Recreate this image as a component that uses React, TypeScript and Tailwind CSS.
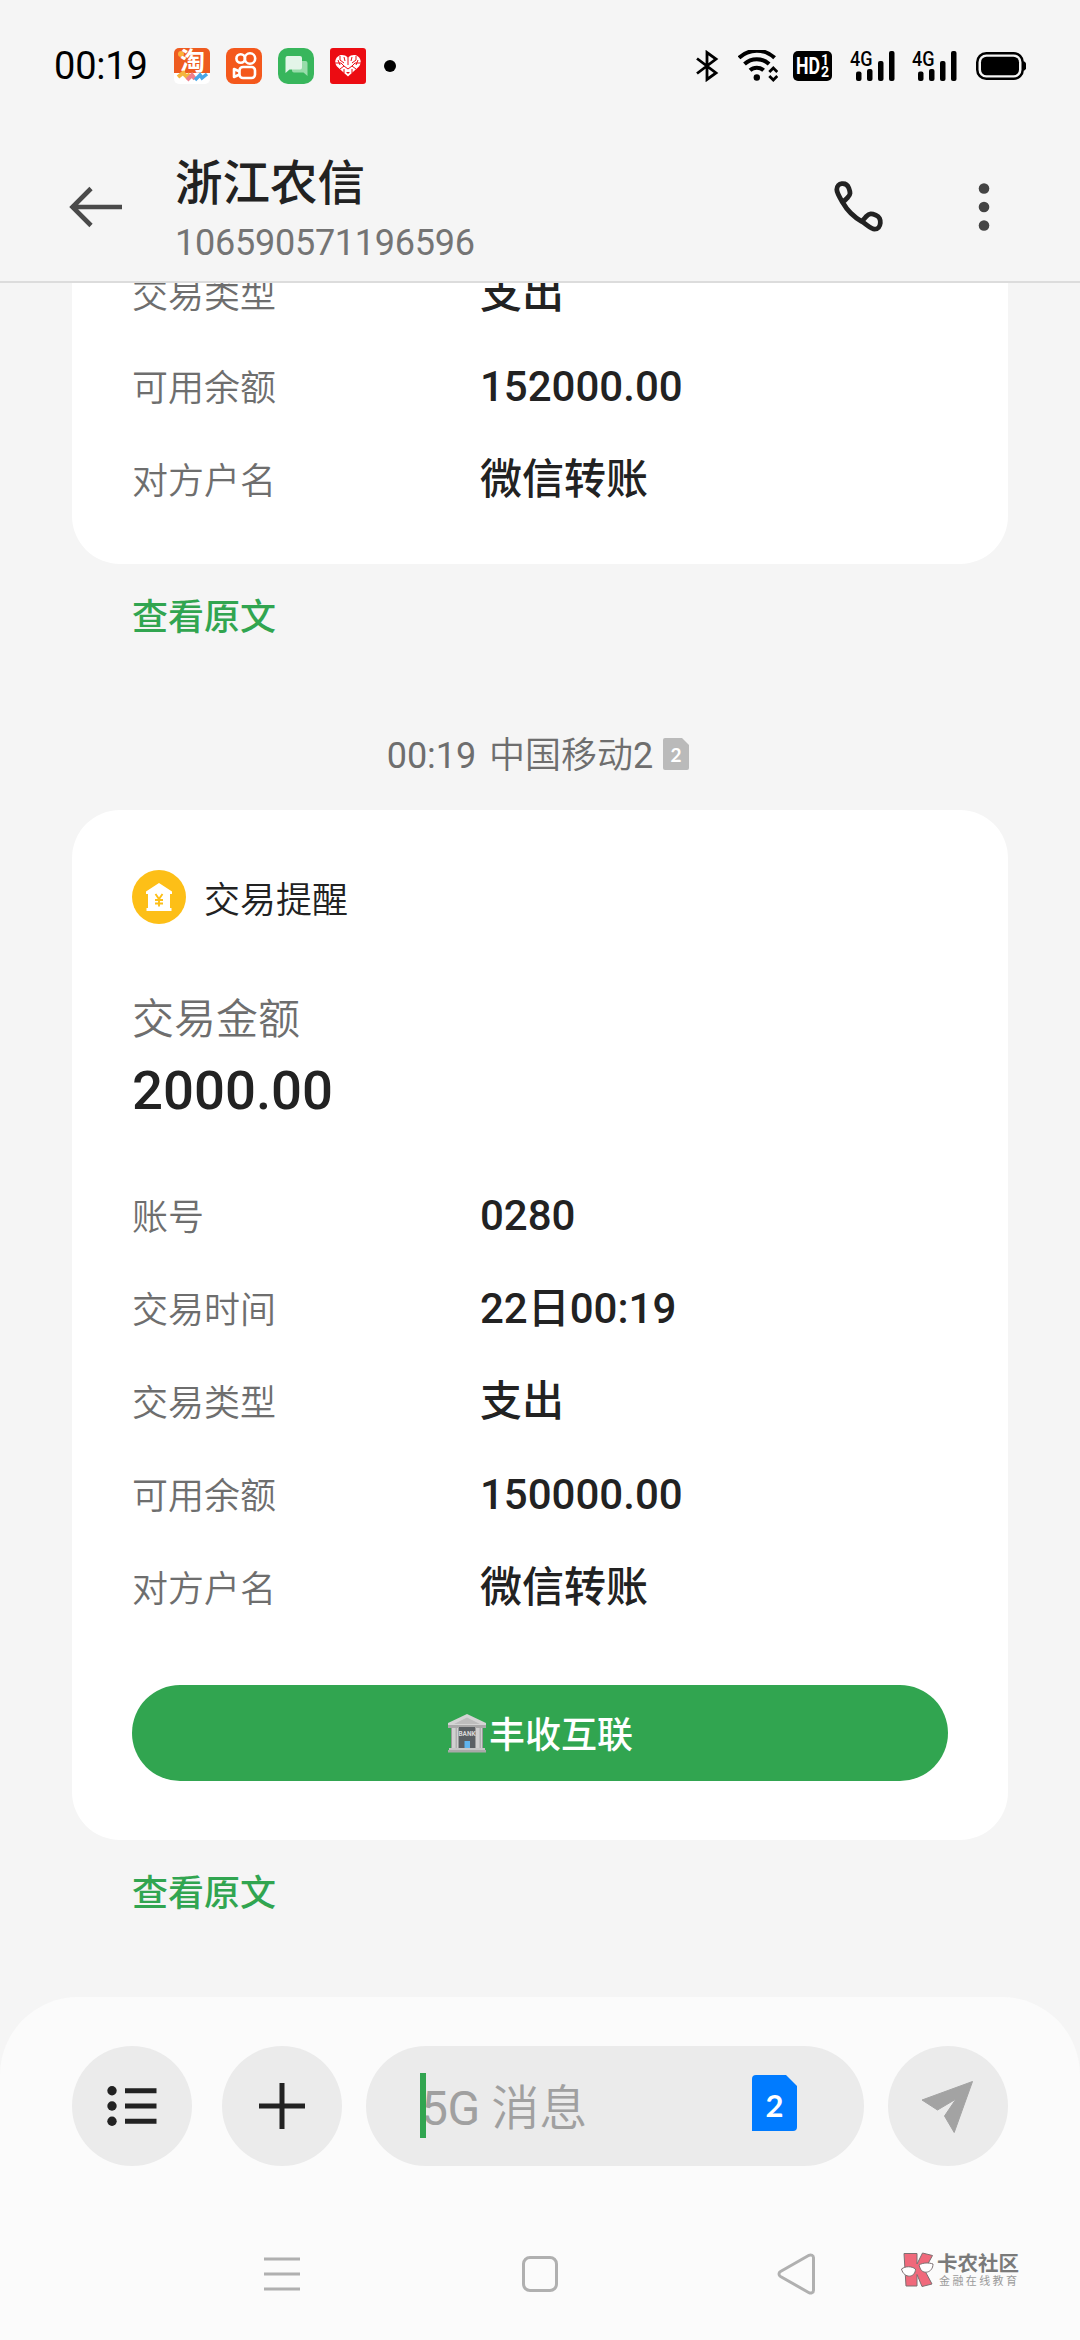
type Detail = {
  label: string
  value: string
}

const previousDetails: Detail[] = [
  { label: '交易类型', value: '支出' },
  { label: '可用余额', value: '152000.00' },
  { label: '对方户名', value: '微信转账' },
]

const currentDetails: Detail[] = [
  { label: '账号', value: '0280' },
  { label: '交易时间', value: '22日00:19' },
  { label: '交易类型', value: '支出' },
  { label: '可用余额', value: '150000.00' },
  { label: '对方户名', value: '微信转账' },
]

function TaobaoIcon() {
  return (
    <svg className="size-9 overflow-visible" viewBox="0 0 36 36">
      <rect fill="#fff" height="36" rx="5" width="36" />
      <path d="M0 25V5a5 5 0 0 1 5-5h26a5 5 0 0 1 5 5v20z" fill="#ee5b20" />
      <circle cx="7" cy="6" fill="#fbb03b" r="3" />
      <text
        fill="#fff"
        fontFamily="'Noto Sans CJK SC', sans-serif"
        fontSize="25"
        fontWeight="700"
        x="6"
        y="22"
      >
        淘
      </text>
      <path d="M4 29l5-4 4 4 3-3" fill="none" stroke="#f4b63f" strokeWidth="4" />
      <path d="M13 32l5-5 3 4" fill="none" stroke="#ef7f8c" strokeWidth="4" />
      <path d="M21 32l5-5 2 3 5-4" fill="none" stroke="#4aa8e8" strokeWidth="3.500" />
    </svg>
  )
}

function KuaishouIcon() {
  return (
    <svg className="size-9" viewBox="0 0 36 36">
      <rect fill="#f4581c" height="36" rx="8" width="36" />
      <g fill="none" stroke="#fff" strokeWidth="2.600">
        <circle cx="14.700" cy="10.500" r="4.300" />
        <circle cx="24" cy="10.500" r="5.200" />
        <rect height="11" rx="3.500" width="15.500" x="13.500" y="19" />
        <path d="M13.500 23.500L8 21v8l5.500-2.500" strokeLinejoin="round" />
      </g>
    </svg>
  )
}

function MessagesIcon() {
  return (
    <svg className="size-9" viewBox="0 0 36 36">
      <rect fill="#38b65c" height="36" rx="10" width="36" />
      <path
        d="M16 13h11.500a2 2 0 0 1 2 2v13l-4-3.500H16a2 2 0 0 1-2-2V15a2 2 0 0 1 2-2z"
        fill="#98dcaa"
      />
      <path
        d="M9.500 8H22a2 2 0 0 1 2 2v9.500a2 2 0 0 1-2 2H11.500l-4 3.500V10a2 2 0 0 1 2-2z"
        fill="#e3f5e8"
      />
    </svg>
  )
}

function PinduoduoIcon() {
  return (
    <svg className="size-9" viewBox="0 0 36 36">
      <rect fill="#ec0c12" height="36" rx="3" width="36" />
      <path
        d="M18 28.500L7 18.500c-3-3.500-2-9 2.500-11 3-1 6-.2 8.500 2 2.500-2.200 5.500-3 8.500-2 4.500 2 5.500 7.500 2.500 11z"
        fill="#fff"
      />
      <g fill="none" stroke="#ec0c12" strokeWidth="1">
        <path d="M18 9v8M10 8v4l4 3M26 8v4l-4 3M5 15h6l3 3M31 15h-6l-3 3M10 21l4-3 4 3 4-3 4 3" />
        <path d="M14 9l1 4M22 9l-1 4M8 12l2 5M28 12l-2 5M14 21v4M22 21v4" />
      </g>
      <path d="M16 24h4l-2 2z" fill="#ec0c12" />
    </svg>
  )
}

function BluetoothIcon() {
  return (
    <svg
      className="h-[32px] w-[24px]"
      fill="none"
      stroke="#000"
      strokeWidth="2.800"
      viewBox="0 0 24 32"
    >
      <path d="M2 8.500l19 14.500-9 6.500v-27l9 6.500L2 23.500" />
    </svg>
  )
}

function WifiIcon() {
  return (
    <svg
      className="h-[32px] w-[40px]"
      fill="none"
      stroke="#000"
      strokeWidth="4"
      viewBox="0 0 40 32"
    >
      <path d="M1 7.800a26 26 0 0 1 35.600 0M6.500 14a18 18 0 0 1 24.600 0M12 20.300a10 10 0 0 1 13.600 0" />
      <circle cx="18.800" cy="27.500" fill="#000" r="3.200" stroke="none" />
      <path d="M31.300 22l4-4 4 4M31.300 26l4 4 4-4" strokeWidth="2.800" />
    </svg>
  )
}

function HdIcon() {
  return (
    <svg
      className="h-[30px] w-[39px] overflow-visible"
      fill="#fff"
      fontFamily="Roboto, sans-serif"
      fontWeight="700"
      viewBox="0 0 39 30"
    >
      <rect fill="#000" height="30" rx="5" width="39" />
      <text fontSize="23" lengthAdjust="spacingAndGlyphs" textLength="24" x="3" y="23">
        HD
      </text>
      <text fontSize="14" x="28" y="14">
        1
      </text>
      <text fontSize="14" x="28" y="25.500">
        2
      </text>
    </svg>
  )
}

function SignalIcon() {
  return (
    <svg className="h-[32px] w-[45px] overflow-visible" viewBox="0 0 45 32">
      <text
        fontFamily="Roboto, sans-serif"
        fontSize="20.500"
        fontWeight="500"
        lengthAdjust="spacingAndGlyphs"
        textLength="22.500"
        x="0"
        y="16"
      >
        4G
      </text>
      <rect height="9.500" rx="2" width="5.500" x="6" y="21.500" />
      <rect height="12" rx="2" width="5.500" x="17" y="19" />
      <rect height="20" rx="2" width="5.500" x="28" y="11" />
      <rect height="30" rx="2" width="5.500" x="39" y="1" />
    </svg>
  )
}

function BatteryIcon() {
  return (
    <svg className="h-[28px] w-[50px]" viewBox="0 0 50 28">
      <rect
        fill="none"
        height="25.500"
        rx="9"
        stroke="#000"
        strokeWidth="2.500"
        width="45.500"
        x="1.250"
        y="1.250"
      />
      <rect height="18.500" rx="5.500" width="38" x="5" y="4.750" />
      <path d="M47.500 9a5.500 5.500 0 0 1 0 10z" />
    </svg>
  )
}

function StatusBar() {
  return (
    <div className="flex h-[132px] items-center pr-[54px] pl-[54px]">
      <span className="w-[120px] text-[38px] tracking-[-0.200px] text-black">00:19</span>
      <div className="flex items-center gap-4">
        <TaobaoIcon />
        <KuaishouIcon />
        <MessagesIcon />
        <PinduoduoIcon />
      </div>
      <span className="ml-[18px] size-3 rounded-full bg-black" />
      <div className="ml-auto flex items-center">
        <BluetoothIcon />
        <span className="ml-[19px] flex">
          <WifiIcon />
        </span>
        <span className="ml-[15px] flex">
          <HdIcon />
        </span>
        <span className="ml-[18px] flex">
          <SignalIcon />
        </span>
        <span className="ml-[17px] flex">
          <SignalIcon />
        </span>
        <span className="ml-[19px] flex">
          <BatteryIcon />
        </span>
      </div>
    </div>
  )
}

function Header() {
  return (
    <header className="flex h-[151px] items-center border-b-2 border-[#dcdcdc] pr-[90px] pl-[69px]">
      <svg
        className="h-[42px] w-[54px]"
        fill="none"
        stroke="#4a4a4a"
        strokeWidth="4.600"
        viewBox="0 0 54 42"
      >
        <path d="M53 21H4M22 2.500L3.500 21 22 39.500" />
      </svg>
      <div className="ml-[52px] flex flex-col pt-[10px]">
        <h1 className="text-[47.500px] leading-[62px] font-medium text-[#222]">浙江农信</h1>
        <p className="text-[36px] leading-[56px] tracking-[-0.250px] text-[#747474]">
          106590571196596
        </p>
      </div>
      <svg
        className="ml-auto size-[54px]"
        fill="none"
        stroke="#222"
        strokeLinejoin="round"
        strokeWidth="4.800"
        viewBox="0 0 54 54"
      >
        <path d="M10.700 22.500C8 18 4.800 13 4.800 9.500c0-7 9.500-8 12-1.500 1.700 4.500 2 6.500-1.300 9.800-1.300 1.300-3.200 2.500-4.800 4.700 4.300 7.500 11.300 14.500 18.800 18.800 2.200-1.600 3.400-3.500 4.700-4.800 3.300-3.300 5.300-3 9.800-1.300 6.500 2.500 5.500 14-1.500 14-3.500 0-8.500-5.200-13-7.900" />
      </svg>
      <svg className="ml-[92px] h-[50px] w-[12px]" fill="#444" viewBox="0 0 12 50">
        <circle cx="6" cy="6.500" r="5.300" />
        <circle cx="6" cy="25" r="5.300" />
        <circle cx="6" cy="43.500" r="5.300" />
      </svg>
    </header>
  )
}

function DetailRows({ details }: { details: Detail[] }) {
  return (
    <dl>
      {details.map((detail) => (
        <div className="flex h-[93px] items-center" key={detail.label}>
          <dt className="w-[348px] pt-1 text-[36px] font-[350] text-[#6e6e6e]">
            {detail.label}
          </dt>
          <dd className="text-[42px] font-medium text-[#222]">{detail.value}</dd>
        </div>
      ))}
    </dl>
  )
}

function OriginalLink() {
  return (
    <a className="flex h-[104px] items-center pt-[3px] pl-[132px] text-[36px] font-medium text-[#31a550]">
      查看原文
    </a>
  )
}

function BankEmoji() {
  return (
    <svg className="size-10" viewBox="0 0 40 40">
      <path d="M20 1l19 9v4H1v-4z" fill="#d4d4d4" />
      <path d="M20 4.500l13 6.500H7z" fill="#bdbdbd" />
      <path d="M1 12h38v3H1z" fill="#a9a9a9" />
      <path d="M4 15h32v20H4z" fill="#9b9b9b" />
      <path d="M5 15h6v20H5zM29 15h6v20h-6z" fill="#d0d0d0" />
      <path d="M8.500 15h1.500v20H8.500zM32.500 15H34v20h-1.500z" fill="#b0b0b0" />
      <path d="M12 14h16v21H12z" fill="#5b6064" />
      <text
        fill="#d8d8d8"
        fontFamily="Roboto, sans-serif"
        fontSize="6.500"
        fontWeight="700"
        textAnchor="middle"
        x="20"
        y="22.500"
      >
        BANK
      </text>
      <path d="M17.500 28h5.500v7h-5.500z" fill="#5fb4ee" />
      <path d="M2 35h36v4H2z" fill="#c6c6c6" />
      <path d="M1 37h38v2.500H1z" fill="#a9a9a9" />
    </svg>
  )
}

function TransactionCard() {
  return (
    <section className="mx-[72px] flex h-[1030px] flex-col rounded-[48px] bg-white px-[60px] pt-[60px]">
      <div className="flex h-[54px] items-center">
        <svg className="size-[54px]" viewBox="0 0 54 54">
          <circle cx="27" cy="27" fill="#fdbf17" r="27" />
          <path
            d="M27 13l13 8.500v2.500h-2v14h1.500v3h-25v-3H16V24h-2v-2.500z"
            fill="#fff"
          />
          <path
            d="M23.500 24l3.500 5 3.500-5M27 29v7.500M23 30h8M23 33.500h8"
            fill="none"
            stroke="#fdbf17"
            strokeWidth="1.900"
          />
        </svg>
        <h2 className="ml-[18px] pt-[7px] text-[36px] font-[350] text-[#222]">交易提醒</h2>
      </div>
      <p className="mt-[66px] text-[42px] leading-[60px] font-[350] text-[#6e6e6e]">交易金额</p>
      <p className="mt-[3px] text-[54.500px] leading-[74px] font-medium text-[#222]">2000.00</p>
      <div className="mt-[42px]">
        <DetailRows details={currentDetails} />
      </div>
      <button className="mt-[51px] flex h-24 items-center justify-center gap-[2px] rounded-full bg-[#31a550] text-[36px] font-medium text-white">
        <BankEmoji />
        <span className="pt-[5px]">丰收互联</span>
      </button>
    </section>
  )
}

function Composer() {
  return (
    <div className="flex h-[120px] items-center px-[72px]">
      <button className="flex size-[120px] items-center justify-center rounded-full bg-[#ebebeb]">
        <svg className="h-[42px] w-[50px]" fill="#222" viewBox="0 0 50 42">
          <circle cx="5" cy="5.700" r="4.700" />
          <circle cx="5" cy="21" r="4.700" />
          <circle cx="5" cy="36.300" r="4.700" />
          <path d="M18 3.200h31.500v5H18zM18 18.500h31.500v5H18zM18 33.800h31.500v5H18z" />
        </svg>
      </button>
      <button className="ml-[30px] flex size-[120px] items-center justify-center rounded-full bg-[#ebebeb]">
        <svg className="size-[46px]" stroke="#222" strokeWidth="5" viewBox="0 0 46 46">
          <path d="M23 0v46M0 23h46" />
        </svg>
      </button>
      <div className="ml-[24px] flex h-[120px] w-[498px] items-center rounded-full bg-[#ebebeb] pr-[67px] pl-[54px]">
        <span className="z-10 mb-[2px] h-[65px] w-[6px] bg-[#31a550]" />
        <span className="-ml-[5px] pt-[6px] text-[48px] font-[350] text-[#a0a0a0]">
          <span className="font-normal tracking-[-0.500px]">5G</span> 消息
        </span>
        <svg className="mb-[6px] ml-auto h-[56px] w-[45px]" viewBox="0 0 45 56">
          <path
            d="M4 0h30l11 11v41a4 4 0 0 1-4 4H0V4a4 4 0 0 1 4-4z"
            fill="#007bff"
          />
          <text
            fill="#fff"
            fontFamily="Lato, sans-serif"
            fontSize="31"
            fontWeight="700"
            textAnchor="middle"
            x="22.500"
            y="42"
          >
            2
          </text>
        </svg>
      </div>
      <button className="ml-[24px] flex size-[120px] items-center justify-center rounded-full bg-[#ebebeb]">
        <svg
          className="size-[54px]"
          fill="#a3a3a3"
          stroke="#a3a3a3"
          strokeLinejoin="round"
          viewBox="0 0 54 54"
        >
          <path d="M1 21L51.500 2.500l-18.300 51-9.700-16.500 11.500-17-18.500 11z" />
        </svg>
      </button>
    </div>
  )
}

function Watermark() {
  return (
    <div className="absolute top-[23px] left-[900px] flex items-start">
      <svg
        className="h-[35px] w-[35px]"
        stroke="#7d7072"
        strokeWidth="1"
        viewBox="0 0 35 35"
      >
        <path d="M4 1.500h13V12L22.500 1l10 2.500L24.500 18l7.500 14-10 2.500-5-12V34H6z" fill="#f0697b" />
        <path d="M1.500 17c4-3 10-3 14 0 0 9-11.500 10-14 0zM19 13c4-2.500 10-2.500 14-1 0 9-10.500 11-13 4z" fill="#fff" />
      </svg>
      <div className="ml-[2px] flex flex-col pt-px text-[#7a7a7a]">
        <span className="text-[20.500px] leading-[22px] font-bold whitespace-nowrap">卡农社区</span>
        <span className="ml-[2px] text-[11px] leading-[13px] tracking-[2.400px] whitespace-nowrap text-[#9a9a9a]">
          金融在线教育
        </span>
      </div>
    </div>
  )
}

function NavigationBar() {
  return (
    <nav className="relative mt-[63px] flex h-[90px] items-center pl-[264px]">
      <svg className="h-[36px] w-[36px]" stroke="#b0b0b0" strokeWidth="3" viewBox="0 0 36 36">
        <path d="M0 3h36M0 18h36M0 33h36" />
      </svg>
      <span className="ml-[222px] size-[36px] rounded-[8px] border-3 border-[#b0b0b0]" />
      <svg
        className="ml-[219px] h-[42px] w-[40px]"
        fill="none"
        stroke="#b0b0b0"
        strokeLinejoin="round"
        strokeWidth="3"
        viewBox="0 0 40 42"
      >
        <path d="M3.500 18.500L32 2.300c2-1 4.500 0 4.500 2.500v32.400c0 2.500-2.500 3.500-4.500 2.500L3.500 23.500c-2-1.200-2-3.800 0-5z" />
      </svg>
      <Watermark />
    </nav>
  )
}

export default function App() {
  return (
    <div className="flex h-[2340px] w-[1080px] flex-col overflow-hidden bg-[#f5f5f5] font-[Roboto,'Noto_Sans_CJK_SC',sans-serif]">
      <StatusBar />
      <Header />
      <main className="h-[1714px] overflow-hidden">
        <section className="mx-[72px] -mt-[36px] rounded-b-[48px] bg-white px-[60px] pb-[38px]">
          <DetailRows details={previousDetails} />
        </section>
        <OriginalLink />
        <div className="mt-[56px] flex h-[60px] items-center justify-center pr-[4px] text-[36px] text-[#6e6e6e]">
          <span className="pt-1 font-[350] whitespace-pre [word-spacing:4px]">
            <span className="font-normal">00:19</span> 中国移动
            <span className="font-normal">2</span>
          </span>
          <svg className="ml-[10px] h-[32px] w-[26px]" viewBox="0 0 26 32">
            <path
              d="M2 0h17l7 7v23a2 2 0 0 1-2 2H2a2 2 0 0 1-2-2V2a2 2 0 0 1 2-2z"
              fill="#bababa"
            />
            <text
              fill="#fff"
              fontFamily="Lato, sans-serif"
              fontSize="19"
              fontWeight="700"
              textAnchor="middle"
              x="13"
              y="24"
            >
              2
            </text>
          </svg>
        </div>
        <div className="mt-[26px]">
          <TransactionCard />
        </div>
        <OriginalLink />
      </main>
      <footer className="h-[343px] rounded-t-[78px] bg-[#fbfbfb] pt-[49px]">
        <Composer />
        <NavigationBar />
      </footer>
    </div>
  )
}
